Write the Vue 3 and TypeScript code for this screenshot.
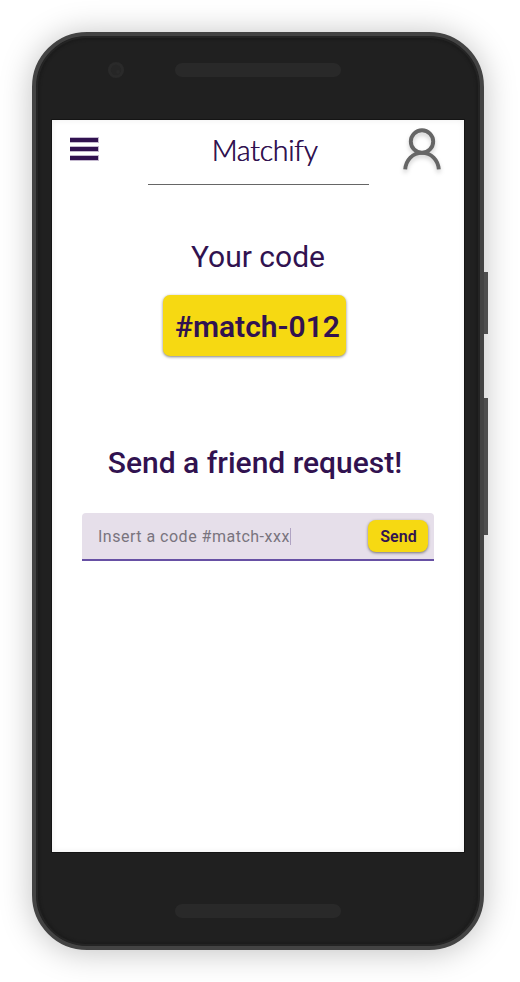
<script setup lang="ts">
import { ref } from 'vue'

const code = ref('#match-012')
const draft = ref('Insert a code #match-xxx')
</script>

<template>
  <div class="stage">
    <div class="phone">
      <i class="side-key power"></i>
      <i class="side-key volume"></i>
      <div class="bezel top">
        <svg class="camera" viewBox="0 0 16 16">
          <circle cx="8" cy="8" r="8" fill="#2a2a2a" />
          <circle cx="8" cy="8" r="5.2" fill="#262626" />
          <circle cx="10" cy="9.8" r="2" fill="#2a2a2a" />
        </svg>
        <span class="slot"></span>
      </div>
      <main class="screen">
        <header class="bar">
          <svg class="menu" viewBox="0 0 29 24" aria-label="Menu">
            <g fill="#c4b9cf">
              <rect width="29" height="6" y="0" />
              <rect width="29" height="6" y="9" />
              <rect width="29" height="6" y="18" />
            </g>
            <g fill="#311250">
              <rect width="28" height="4" y="1" />
              <rect width="28" height="4" y="10" />
              <rect width="28" height="4" y="19" />
            </g>
          </svg>
          <h1 class="brand"><span>Matchify</span></h1>
          <svg class="user" viewBox="0 0 40 46" aria-label="Profile">
            <g fill="none" stroke="#666" stroke-width="3.9">
              <circle cx="20" cy="14.5" r="11.2" />
              <path d="M3.2 42.4C3.9 32.8 10.7 25.9 20 25.9S36.1 32.8 36.8 42.4" />
            </g>
          </svg>
        </header>
        <h2 class="label">Your code</h2>
        <div class="code">{{ code }}</div>
        <h2 class="request">Send a friend request!</h2>
        <form class="field" @submit.prevent>
          <span class="draft">{{ draft }}</span><i class="caret"></i>
          <button class="send" type="submit">Send</button>
        </form>
      </main>
      <div class="bezel bottom"><span class="slot"></span></div>
    </div>
  </div>
</template>

<style>
body {
  background: #fff;
}
</style>

<style scoped>
.stage {
  box-sizing: border-box;
  width: 520px;
  height: 982px;
  padding: 32px;
  overflow: hidden;
  font-family: Roboto, sans-serif;
  color: #311250;
}
.phone {
  position: relative;
  box-sizing: border-box;
  width: 452px;
  height: 918px;
  border: 4px solid #434343;
  border-radius: 55px;
  background: #202020;
  box-shadow: 0 2px 32px rgba(0, 0, 0, 0.25), inset 0 0 0 2px #242424, inset 0 0 2px 4px #1c1c1c;
}
.side-key {
  position: absolute;
  right: -8px;
  width: 4px;
  background: #4e4e4e;
}
.power {
  top: 236px;
  height: 62px;
}
.volume {
  top: 362px;
  height: 137px;
}
.bezel {
  display: flex;
  align-items: center;
  box-sizing: border-box;
}
.bezel.top {
  height: 84px;
  padding: 0 0 16px 72px;
  gap: 51px;
}
.bezel.bottom {
  height: 94px;
  padding: 24px 0 0 139px;
}
.camera {
  width: 16px;
  height: 16px;
}
.slot {
  width: 166px;
  height: 14px;
  border-radius: 7px;
  background: #292929;
}
.screen {
  display: flex;
  flex-direction: column;
  align-items: center;
  box-sizing: border-box;
  width: 412px;
  height: 732px;
  margin-left: 16px;
  background: #fff;
  box-shadow: 0 0 0 1px #141414, inset 0 0 6px rgba(0, 0, 0, 0.07);
}
.bar {
  display: flex;
  width: 100%;
  height: 65px;
  box-sizing: border-box;
  padding: 0 22px 0 18px;
}
.menu {
  width: 29px;
  height: 24px;
  margin-top: 17px;
}
.brand {
  display: flex;
  justify-content: center;
  box-sizing: border-box;
  width: 221px;
  height: 65px;
  margin: 0 0 0 49px;
  padding-left: 12px;
  border-bottom: 1px solid #666;
  font: 300 28.5px/61px Lato, sans-serif;
  letter-spacing: -0.25px;
  text-shadow: 0.5px 0 #311250;
}
.user {
  width: 40px;
  height: 46px;
  margin: 7px 0 0 auto;
  filter: drop-shadow(0 3px 2px rgba(0, 0, 0, 0.18));
}
.label,
.request {
  margin: 0;
  font-size: 30px;
  line-height: 36px;
  white-space: nowrap;
}
.label {
  margin-top: 54px;
  font-weight: 400;
}
.code {
  box-sizing: border-box;
  width: 183px;
  height: 61px;
  margin: 20px 0 0 -7px;
  padding-left: 12px;
  border-radius: 7px;
  background: #f6d912;
  box-shadow: 0 1px 3px rgba(0, 0, 0, 0.5);
  font-size: 30px;
  font-weight: 600;
  line-height: 63px;
}
.request {
  margin: 89px 0 0 -6px;
  font-weight: 500;
}
.field {
  display: flex;
  align-items: center;
  box-sizing: border-box;
  width: 352px;
  height: 48px;
  margin-top: 32px;
  padding: 0 6px 0 16px;
  border-bottom: 2px solid #6750a4;
  border-radius: 4px 4px 0 0;
  background: #e6dfea;
}
.draft {
  color: #79747e;
  font-size: 16px;
  letter-spacing: 0.5px;
  white-space: nowrap;
}
.caret {
  width: 1.5px;
  height: 17px;
  background: #b0a3c3;
}
.send {
  width: 60px;
  height: 32px;
  margin-left: auto;
  padding: 0 0 0 1px;
  border: 0;
  border-radius: 8px;
  background: #f6d912;
  box-shadow: 0 1px 3px rgba(0, 0, 0, 0.5);
  color: #311250;
  font: 600 16px/33px Roboto, sans-serif;
}
</style>
